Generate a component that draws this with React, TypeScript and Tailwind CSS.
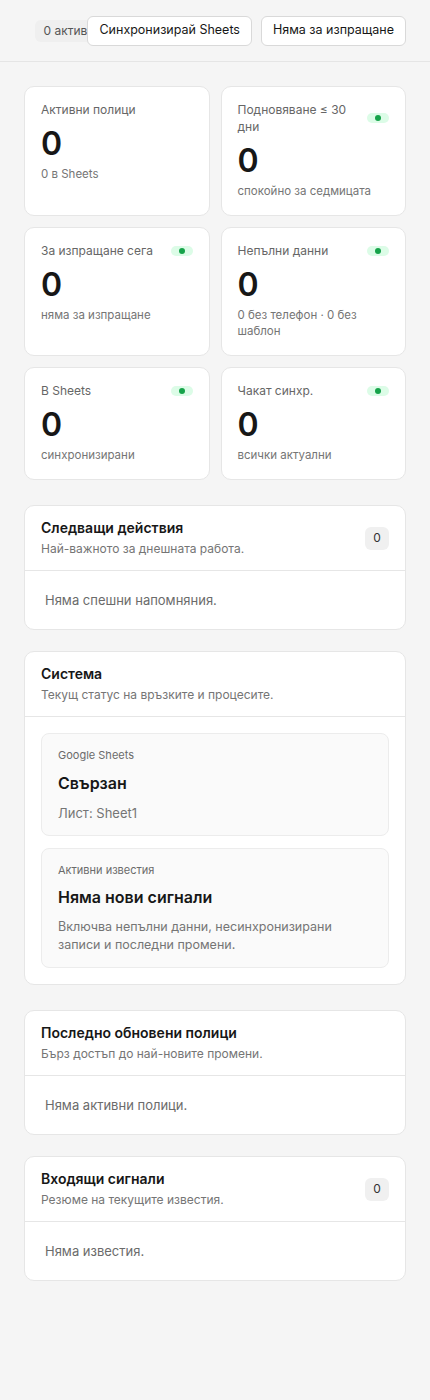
const stats = [
  { label: "Активни полици", value: "0", sub: "0 в Sheets", dot: false },
  { label: "Подновяване ≤ 30 дни", value: "0", sub: "спокойно за седмицата", dot: true },
  { label: "За изпращане сега", value: "0", sub: "няма за изпращане", dot: true },
  { label: "Непълни данни", value: "0", sub: "0 без телефон · 0 без шаблон", dot: true },
  { label: "В Sheets", value: "0", sub: "синхронизирани", dot: true },
  { label: "Чакат синхр.", value: "0", sub: "всички актуални", dot: true },
];

function StatCard({ label, value, sub, dot }: { label: string; value: string; sub: string; dot: boolean }) {
  return (
    <div className="rounded-[10px] border border-[#e6e6e6] bg-white px-4 pb-4 pt-[14px]">
      <div className="flex items-center justify-between gap-2">
        <div className="text-[12px] leading-[17px] text-[#666666]">{label}</div>
        {dot && (
          <span className="flex h-[10px] w-[22px] shrink-0 items-center justify-center rounded-[5px] bg-[#dcfce7]">
            <span className="h-[6px] w-[6px] rounded-full bg-[#16a34a]" />
          </span>
        )}
      </div>
      <div className="mt-[10px] text-[32px] font-semibold leading-8 text-[#171717]">{value}</div>
      <div className="mt-[6px] text-[11.5px] leading-4 text-[#757575]">{sub}</div>
    </div>
  );
}

function Panel({
  title,
  subtitle,
  badge,
  children,
}: {
  title: string;
  subtitle: string;
  badge?: string;
  children: React.ReactNode;
}) {
  return (
    <section className="rounded-[10px] border border-[#e6e6e6] bg-white">
      <div className="flex items-center justify-between border-b border-[#e6e6e6] px-4 py-3">
        <div>
          <h2 className="text-[14px] font-semibold leading-5 text-[#171717]">{title}</h2>
          <p className="mt-0.5 text-[12px] leading-[18px] text-[#757575]">{subtitle}</p>
        </div>
        {badge && (
          <span className="flex h-[23px] w-6 items-center justify-center rounded-md bg-[#f0f0f0] text-[12px] text-[#333333]">
            {badge}
          </span>
        )}
      </div>
      {children}
    </section>
  );
}

function Empty({ text }: { text: string }) {
  return <div className="px-5 py-5 text-[13px] leading-[18px] text-[#6b6b6b]">{text}</div>;
}

export default function App() {
  return (
    <div className="min-h-screen bg-[#f5f5f5] pb-24 font-['Inter','Noto_Sans',sans-serif]">
      {/* Header */}
      <header className="flex h-[62px] items-center justify-end border-b border-[#e5e5e5] pr-6">
        <div className="flex h-[22px] w-[52px] items-center overflow-hidden whitespace-nowrap rounded-l-md bg-[#efefef] pl-2 text-[12px] text-[#555555]">
          0 активни
        </div>
        <button className="h-[30px] rounded-md border border-[#d9d9d9] bg-white px-[11px] text-[12.5px] text-[#171717]">
          Синхронизирай Sheets
        </button>
        <button className="ml-[9px] h-[30px] rounded-md border border-[#d9d9d9] bg-white px-[11px] text-[12.5px] text-[#171717]">
          Няма за изпращане
        </button>
      </header>

      <main className="px-6 pt-6">
        {/* Stats */}
        <div className="grid grid-cols-2 gap-[11px]">
          {stats.map((s, i) => (
            <StatCard key={i} {...s} />
          ))}
        </div>

        <div className="mt-[25px] flex flex-col gap-[21px]">
          <Panel title="Следващи действия" subtitle="Най-важното за днешната работа." badge="0">
            <Empty text="Няма спешни напомняния." />
          </Panel>

          <Panel title="Система" subtitle="Текущ статус на връзките и процесите.">
            <div className="flex flex-col gap-3 p-4">
              <div className="rounded-lg border border-[#ececec] bg-[#fafafa] px-4 py-[13px]">
                <div className="text-[11px] leading-[17px] text-[#6b6b6b]">Google Sheets</div>
                <div className="mt-2 text-[16px] font-semibold leading-[22px] text-[#171717]">Свързан</div>
                <div className="mt-2.5 text-[13px] leading-[18px] text-[#757575]">Лист: Sheet1</div>
              </div>
              <div className="rounded-lg border border-[#ececec] bg-[#fafafa] px-4 py-[13px]">
                <div className="text-[11px] leading-4 text-[#6b6b6b]">Активни известия</div>
                <div className="mt-2 text-[16px] font-semibold leading-[22px] text-[#171717]">Няма нови сигнали</div>
                <div className="mt-2.5 text-[12.5px] leading-[18px] text-[#757575]">
                  Включва непълни данни, несинхронизирани записи и последни промени.
                </div>
              </div>
            </div>
          </Panel>
        </div>

        <div className="mt-[25px] flex flex-col gap-[21px]">
          <Panel title="Последно обновени полици" subtitle="Бърз достъп до най-новите промени.">
            <Empty text="Няма активни полици." />
          </Panel>

          <Panel title="Входящи сигнали" subtitle="Резюме на текущите известия." badge="0">
            <Empty text="Няма известия." />
          </Panel>
        </div>
      </main>
    </div>
  );
}
